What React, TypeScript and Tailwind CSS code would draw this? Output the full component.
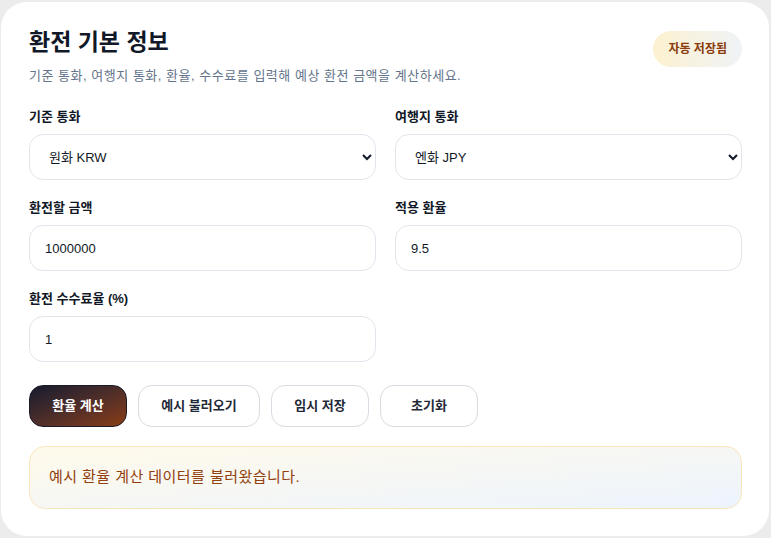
import { useState } from 'react'

const font = { fontFamily: '"Liberation Sans", "Noto Sans CJK KR", sans-serif' }

function Field({ label, children }: { label: string; children: React.ReactNode }) {
  return (
    <div className="flex flex-col">
      <label className="text-[13px] leading-[18px] font-bold text-[#111827] mb-[8px]">{label}</label>
      {children}
    </div>
  )
}

const boxClass =
  'h-[46px] w-full rounded-[14px] border border-[#e2e4ec] bg-white px-[15px] text-[13px] text-[#111827] outline-none'

export default function App() {
  const [base, setBase] = useState('KRW')
  const [target, setTarget] = useState('JPY')
  const [amount, setAmount] = useState('1000000')
  const [rate, setRate] = useState('9.5')
  const [fee, setFee] = useState('1')

  return (
    <div className="min-h-[538px] bg-[#ececec] pt-[2px] pl-[1px]" style={font}>
      <div className="w-[768px] h-[534px] bg-white rounded-[26px] pl-[28px] pr-[27px] pt-[25px] pb-[27px]">
        <div className="flex items-start justify-between">
          <div>
            <h2 className="text-[23px] leading-[31px] font-bold text-[#111827]">환전 기본 정보</h2>
            <p className="mt-[9px] text-[13px] leading-[18px] tracking-[0.04em] text-[#64748b]">
              기준 통화, 여행지 통화, 환율, 수수료를 입력해 예상 환전 금액을 계산하세요.
            </p>
          </div>
          <span className="mt-[4px] h-[36px] px-[15px] flex items-center rounded-full bg-linear-to-r from-[#fdf1cf] to-[#eff3f7] text-[12px] font-bold text-[#8a3a0b]">
            자동 저장됨
          </span>
        </div>

        <div className="mt-[23px] grid grid-cols-2 gap-x-[19px] gap-y-[19px]">
          <Field label="기준 통화">
            <select className={boxClass} value={base} onChange={e => setBase(e.target.value)}>
              <option value="KRW">원화 KRW</option>
              <option value="USD">달러 USD</option>
            </select>
          </Field>
          <Field label="여행지 통화">
            <select className={boxClass} value={target} onChange={e => setTarget(e.target.value)}>
              <option value="JPY">엔화 JPY</option>
              <option value="USD">달러 USD</option>
            </select>
          </Field>
          <Field label="환전할 금액">
            <input className={boxClass} value={amount} onChange={e => setAmount(e.target.value)} />
          </Field>
          <Field label="적용 환율">
            <input className={boxClass} value={rate} onChange={e => setRate(e.target.value)} />
          </Field>
          <Field label="환전 수수료율 (%)">
            <input className={boxClass} value={fee} onChange={e => setFee(e.target.value)} />
          </Field>
        </div>

        <div className="mt-[23px] flex gap-[11px]">
          <button className="h-[42px] w-[98px] rounded-[14px] border border-[#1a1a2a] bg-linear-to-br from-[#161a2d] to-[#8a3c0e] text-[13px] font-bold text-white">
            환율 계산
          </button>
          <button className="h-[42px] w-[122px] rounded-[14px] border border-[#d9dbe3] bg-white text-[13px] font-bold text-[#1f2937]">
            예시 불러오기
          </button>
          <button className="h-[42px] w-[98px] rounded-[14px] border border-[#d9dbe3] bg-white text-[13px] font-bold text-[#1f2937]">
            임시 저장
          </button>
          <button className="h-[42px] w-[98px] rounded-[14px] border border-[#d9dbe3] bg-white text-[13px] font-bold text-[#1f2937]">
            초기화
          </button>
        </div>

        <div className="mt-[19px] h-[63px] flex items-center rounded-[16px] border border-[#fae6bd] bg-linear-to-br from-[#fffaea] to-[#edf4fe] px-[19px] text-[15px] tracking-[0.03em] text-[#92400e]">
          예시 환율 계산 데이터를 불러왔습니다.
        </div>
      </div>
    </div>
  )
}
